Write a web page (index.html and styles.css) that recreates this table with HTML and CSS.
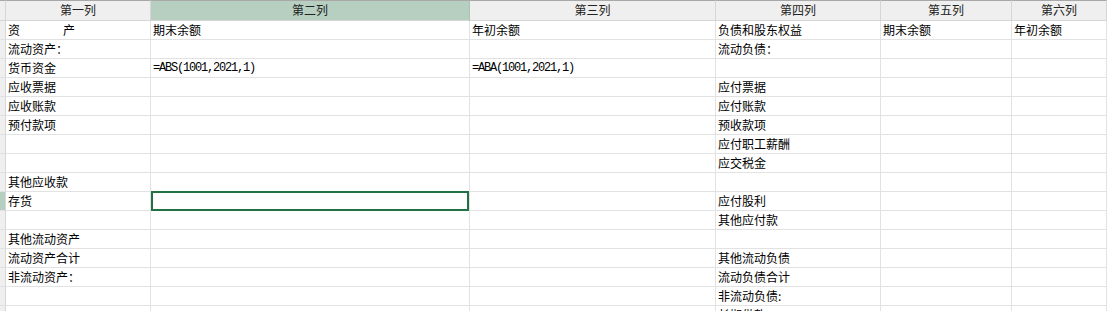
FILE: index.html
```html
<!DOCTYPE html>
<html lang="zh-CN">
<head>
<meta charset="utf-8">
<title>Sheet</title>
<link rel="stylesheet" href="styles.css">
</head>
<body>
<div class="sheet">
  <div class="cell hd corner"></div>
  <div class="cell hd">第一列</div>
  <div class="cell hd hd-sel">第二列</div>
  <div class="cell hd">第三列</div>
  <div class="cell hd">第四列</div>
  <div class="cell hd">第五列</div>
  <div class="cell hd">第六列</div>

  <div class="cell rh"></div><div class="cell">资<span class="gap"></span>产</div><div class="cell">期末余额</div><div class="cell">年初余额</div><div class="cell">负债和股东权益</div><div class="cell">期末余额</div><div class="cell">年初余额</div>
  <div class="cell rh"></div><div class="cell">流动资产：</div><div class="cell"></div><div class="cell"></div><div class="cell">流动负债：</div><div class="cell"></div><div class="cell"></div>
  <div class="cell rh"></div><div class="cell">货币资金</div><div class="cell mono">=ABS(1001,2021,1)</div><div class="cell mono">=ABA(1001,2021,1)</div><div class="cell"></div><div class="cell"></div><div class="cell"></div>
  <div class="cell rh"></div><div class="cell">应收票据</div><div class="cell"></div><div class="cell"></div><div class="cell">应付票据</div><div class="cell"></div><div class="cell"></div>
  <div class="cell rh"></div><div class="cell">应收账款</div><div class="cell"></div><div class="cell"></div><div class="cell">应付账款</div><div class="cell"></div><div class="cell"></div>
  <div class="cell rh"></div><div class="cell">预付款项</div><div class="cell"></div><div class="cell"></div><div class="cell">预收款项</div><div class="cell"></div><div class="cell"></div>
  <div class="cell rh"></div><div class="cell"></div><div class="cell"></div><div class="cell"></div><div class="cell">应付职工薪酬</div><div class="cell"></div><div class="cell"></div>
  <div class="cell rh"></div><div class="cell"></div><div class="cell"></div><div class="cell"></div><div class="cell">应交税金</div><div class="cell"></div><div class="cell"></div>
  <div class="cell rh"></div><div class="cell">其他应收款</div><div class="cell"></div><div class="cell"></div><div class="cell"></div><div class="cell"></div><div class="cell"></div>
  <div class="cell rh rh-sel"></div><div class="cell">存货</div><div class="cell selected"></div><div class="cell"></div><div class="cell">应付股利</div><div class="cell"></div><div class="cell"></div>
  <div class="cell rh"></div><div class="cell"></div><div class="cell"></div><div class="cell"></div><div class="cell">其他应付款</div><div class="cell"></div><div class="cell"></div>
  <div class="cell rh"></div><div class="cell">其他流动资产</div><div class="cell"></div><div class="cell"></div><div class="cell"></div><div class="cell"></div><div class="cell"></div>
  <div class="cell rh"></div><div class="cell">流动资产合计</div><div class="cell"></div><div class="cell"></div><div class="cell">其他流动负债</div><div class="cell"></div><div class="cell"></div>
  <div class="cell rh"></div><div class="cell">非流动资产：</div><div class="cell"></div><div class="cell"></div><div class="cell">流动负债合计</div><div class="cell"></div><div class="cell"></div>
  <div class="cell rh"></div><div class="cell"></div><div class="cell"></div><div class="cell"></div><div class="cell">非流动负债:</div><div class="cell"></div><div class="cell"></div>
  <div class="cell rh"></div><div class="cell"></div><div class="cell"></div><div class="cell"></div><div class="cell">长期借款</div><div class="cell"></div><div class="cell"></div>
</div>
</body>
</html>
```

FILE: styles.css
```css
html, body {
  margin: 0;
  padding: 0;
  background: #ffffff;
  overflow: hidden;
}

.sheet {
  display: grid;
  grid-template-columns: 6px 145px 319px 246px 165px 131px 1fr;
  grid-template-rows: 21px;
  grid-auto-rows: 19px;
  width: 1107px;
  font-family: "Noto Sans CJK SC", "Noto Sans", sans-serif;
  font-size: 12px;
  color: #000;
}

.cell {
  box-sizing: border-box;
  border-right: 1px solid #e2e2e2;
  border-bottom: 1px solid #e2e2e2;
  padding: 0 2px;
  line-height: 18px;
  white-space: nowrap;
  overflow: hidden;
  position: relative;
}

.hd {
  background: #efefef;
  border-top: 1px solid #a8a8a8;
  border-right-color: #d6d6d6;
  border-bottom-color: #d6d6d6;
  text-align: center;
  color: #222;
  line-height: 18px;
}

.hd-sel {
  background: #b6cfc1;
  border-right-color: #a9c2b4;
}

.corner {
  padding: 0;
}

.rh {
  background: #efefef;
  border-right-color: #d6d6d6;
  border-bottom-color: #e0e0e0;
  padding: 0;
}

.rh-sel {
  background: #b6cfc1;
}

.gap {
  display: inline-block;
  width: 43px;
}

.mono {
  font-family: "Liberation Mono", "DejaVu Sans Mono", monospace;
  letter-spacing: -1.2px;
  font-size: 12px;
}

.selected {
  overflow: visible;
}

.selected::after {
  content: "";
  position: absolute;
  top: -1px;
  left: 0;
  right: 0;
  bottom: -1px;
  border: 2px solid #217346;
  box-sizing: border-box;
}
```
